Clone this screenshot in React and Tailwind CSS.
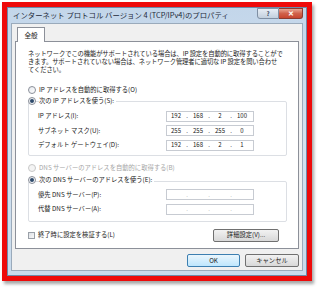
import React from "react";

const font = { fontFamily: '"Noto Sans CJK JP", "Noto Sans", sans-serif' };

function Radio({ checked, disabled }) {
  return (
    <span
      className={
        "inline-flex items-center justify-center w-[8px] h-[8px] rounded-full border shrink-0 " +
        (disabled
          ? "border-[#c8c8c8] bg-[#f4f4f4]"
          : "border-[#8a8f99] bg-gradient-to-br from-[#e6e9ee] to-[#ffffff]")
      }
    >
      {checked && <span className="w-[4px] h-[4px] rounded-full bg-[#2e4a6b]" />}
    </span>
  );
}

function IpField({ parts, empty }) {
  return (
    <div className="w-[88px] h-[11px] border border-[#c7cbd2] bg-white flex items-center text-[6px] leading-none text-[#222]">
      {[0, 1, 2, 3].map((i) => (
        <React.Fragment key={i}>
          <span className="w-[18px] text-center">{empty ? "" : parts[i]}</span>
          {i < 3 && <span className={"w-[4px] text-center " + (empty ? "text-[#b0b0b0]" : "")}>.</span>}
        </React.Fragment>
      ))}
    </div>
  );
}

function Row({ label, children }) {
  return (
    <div className="flex items-center justify-between h-[14.5px]">
      <span>{label}</span>
      {children}
    </div>
  );
}

export default function App() {
  return (
    <div className="w-[320px] h-[290px] bg-white pt-[2px] pl-[2px]" style={font}>
      <div className="w-[310px] h-[279px] border-[5px] border-[#ee0a0a] shadow-[2px_3px_3px_rgba(0,0,0,0.35)]">
        <div className="w-full h-full flex flex-col bg-gradient-to-b from-[#c3d6ea] via-[#d4e2ef] to-[#c9dbec] border border-[#6e8aa8]">
          {/* title bar */}
          <div className="h-[15px] flex items-start shrink-0">
            <span className="ml-[5px] mt-[2px] text-[7.4px] leading-[10px] text-[#1e2a3a] whitespace-nowrap">
              インターネット プロトコル バージョン 4 (TCP/IPv4)のプロパティ
            </span>
            <div className="ml-auto mr-[3px] flex">
              <div className="w-[22px] h-[11px] rounded-bl-[3px] border border-[#7f8fa3] bg-gradient-to-b from-[#e8eef5] to-[#c2cfdd] flex items-center justify-center text-[6px] leading-none text-[#3a4a5c] font-bold">
                ?
              </div>
              <div className="w-[24px] h-[11px] rounded-br-[3px] border border-l-0 border-[#8a3a30] bg-gradient-to-b from-[#e8a493] via-[#d0614b] to-[#c8452f] flex items-center justify-center text-[7px] leading-none text-white font-bold">
                ✕
              </div>
            </div>
          </div>
          {/* body */}
          <div className="mx-[3px] mb-[4px] flex-1 bg-[#f0f0f0] border border-[#9aaabb] flex flex-col px-[3px] pt-[3px] text-[6.3px] leading-[8px] text-[#1a1a1a]">
            <div className="flex">
              <div className="ml-[2px] w-[28px] h-[15px] bg-white border border-b-0 border-[#8c9099] flex items-center justify-center text-[6.6px] relative z-10 -mb-[1px]">
                全般
              </div>
            </div>
            <div className="h-[208px] bg-white border border-[#8c9099] px-[12px] pt-[8px]">
              <p className="whitespace-nowrap tracking-[-0.1px]">
                ネットワークでこの機能がサポートされている場合は、IP 設定を自動的に取得することがで
                <br />
                きます。サポートされていない場合は、ネットワーク管理者に適切な IP 設定を問い合わせ
                <br />
                てください。
              </p>
              <div className="mt-[10px] flex items-center gap-[3px] h-[11px]">
                <Radio />
                <span>IP アドレスを自動的に取得する(O)</span>
              </div>
              <div className="flex items-center gap-[3px] h-[11px] relative z-10">
                <Radio checked />
                <span className="bg-white pr-[2px]">次の IP アドレスを使う(S):</span>
              </div>
              <div className="-mt-[5px] border border-[#dcdfe4] rounded-[2px] pl-[9px] pr-[32px] pt-[7px] pb-[2px] w-[259px]">
                <Row label="IP アドレス(I):">
                  <IpField parts={["192", "168", "2", "100"]} />
                </Row>
                <Row label="サブネット マスク(U):">
                  <IpField parts={["255", "255", "255", "0"]} />
                </Row>
                <Row label="デフォルト ゲートウェイ(D):">
                  <IpField parts={["192", "168", "2", "1"]} />
                </Row>
              </div>
              <div className="mt-[7px] flex items-center gap-[3px] h-[11px] text-[#a6a6a6]">
                <Radio disabled />
                <span>DNS サーバーのアドレスを自動的に取得する(B)</span>
              </div>
              <div className="flex items-center gap-[3px] h-[12px] relative z-10">
                <Radio checked />
                <span className="bg-white pr-[2px]">次の DNS サーバーのアドレスを使う(E):</span>
              </div>
              <div className="-mt-[5px] border border-[#dcdfe4] rounded-[2px] pl-[9px] pr-[32px] pt-[6px] pb-[4px] w-[259px]">
                <Row label="優先 DNS サーバー(P):">
                  <IpField empty />
                </Row>
                <Row label="代替 DNS サーバー(A):">
                  <IpField empty />
                </Row>
              </div>
              <div className="mt-[7px] flex items-center">
                <div className="flex items-center gap-[3px]">
                  <span className="w-[7px] h-[7px] border border-[#9aa0a8] bg-gradient-to-br from-[#dde1e6] to-[#f8f8f8]" />
                  <span>終了時に設定を検証する(L)</span>
                </div>
                <div className="ml-auto mr-[7px] w-[66px] h-[13px] border border-[#707070] rounded-[2px] bg-gradient-to-b from-[#f2f2f2] to-[#d8d8d8] flex items-center justify-center">
                  詳細設定(V)...
                </div>
              </div>
            </div>
            <div className="mt-[5px] flex justify-end gap-[5px]">
              <div className="w-[53px] h-[13px] border border-[#3c7fb1] rounded-[2px] bg-gradient-to-b from-[#eaf6fd] to-[#bee6fd] flex items-center justify-center">
                OK
              </div>
              <div className="w-[54px] h-[13px] border border-[#707070] rounded-[2px] bg-gradient-to-b from-[#f2f2f2] to-[#d8d8d8] flex items-center justify-center">
                キャンセル
              </div>
            </div>
          </div>
        </div>
      </div>
    </div>
  );
}
